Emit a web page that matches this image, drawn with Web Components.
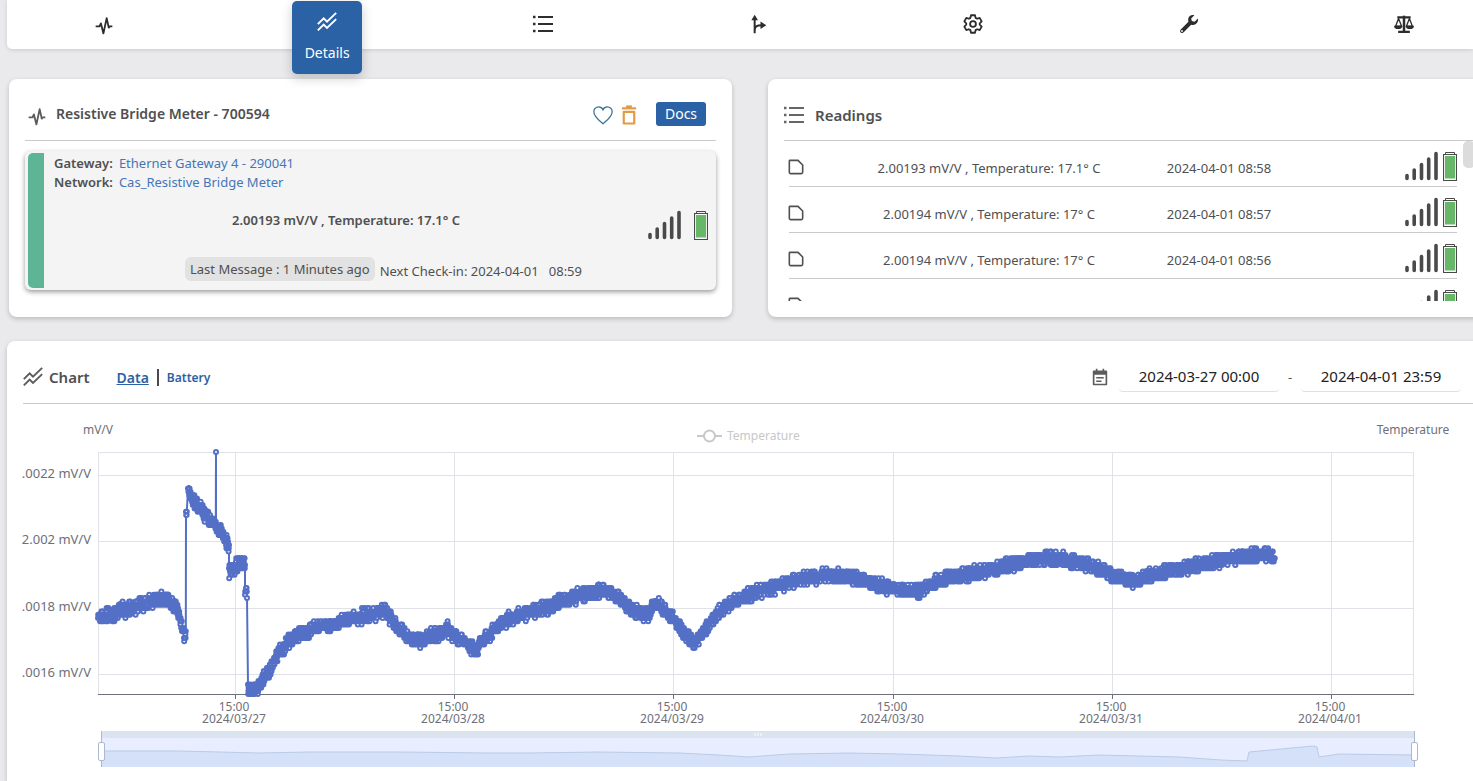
<!DOCTYPE html>
<html lang="en">
<head>
<meta charset="utf-8">
<title>Resistive Bridge Meter</title>
<style>
  html, body { margin: 0; height: 100%; }
  body {
    --ink: #4f5051; --blue: #2b62a5; --link: #4576b8; --line: #c9cacc;
    font: 13px/20px "Noto Sans", "Noto Sans CJK KR", sans-serif;
    color: var(--ink); background: #eaeaec;
  }
</style>
</head>
<body>
<meter-app></meter-app>

<script>
const define = (name, html, setup) => {
  const template = document.createElement('template');
  template.innerHTML = html;
  customElements.define(name, class extends HTMLElement {
    connectedCallback() {
      if (this.shadowRoot) return;
      const root = this.attachShadow({ mode: 'open' });
      root.append(template.content.cloneNode(true));
      if (setup) setup(this, root);
    }
  });
};

/* ---------- icons ---------- */
const ICONS = {
  pulse: '<path d="M2 12.5h4.6l1.7-3.6 3 12L15.2 2.5l2.5 11.5 1-1.500H22" fill="none" stroke="currentColor" stroke-width="2.2" stroke-linejoin="round"/>',
  trend: '<path d="M1 14.5l7-7 4 4L23 1M1 22l7-7 4 4L23 8.500" fill="none" stroke="currentColor" stroke-width="2.3"/>',
  list: '<path d="M0 3.500h3M0 12h3M0 20.500h3" stroke="currentColor" stroke-width="3"/><path d="M6 3.500h18M6 12h18M6 20.500h18" stroke="currentColor" stroke-width="2.400"/>',
  route: '<path d="M8 23V5M8 20c0-5 2-6.500 9-6.500" fill="none" stroke="currentColor" stroke-width="2.400"/><path d="M8 1l4 6.500H4zM22 13.500l-7 4.500V9z" fill="currentColor"/>',
  gear: '<path d="M9.600 1.500h4.800l.7 3.100 1.900 1.100 3-1 2.400 4.200-2.300 2.300v1.600l2.300 2.300-2.400 4.200-3-1-1.900 1.100-.7 3.100H9.600l-.7-3.100L7 18.300l-3 1-2.400-4.200 2.300-2.300v-1.600L1.600 8.900 4 4.700l3 1 1.900-1.100z" fill="none" stroke="currentColor" stroke-width="2.200" stroke-linejoin="round"/><circle cx="12" cy="12" r="3.500" fill="none" stroke="currentColor" stroke-width="2.200"/>',
  wrench: '<path d="M22.700 5.500l-4 3.800-3.300-.8-.8-3.200L18.400 1.400C14.500.2 10.600 3 11 7.500c.1.700.1 1.300.3 1.800L1.800 18.800a2.500 2.500 0 0 0 3.500 3.500l9.300-9.400c4.600 1.600 9.200-2.300 8.100-7.400zM3.600 21.500a1.100 1.100 0 1 1 0-2.200 1.100 1.100 0 0 1 0 2.200z" fill="currentColor"/>',
  scale: '<path d="M4 4h16M5 21.500h14" stroke="currentColor" stroke-width="2.600"/><path d="M12 2v19" stroke="currentColor" stroke-width="3"/><path d="M5.500 5.500L2 14.500h7zM18.500 5.500L15 14.500h7z" fill="none" stroke="currentColor" stroke-width="1.600"/><path d="M0 14h10a5 4 0 0 1-10 0zM14 14h10a5 4 0 0 1-10 0z" fill="currentColor"/>',
  heart: '<path d="M12 22.500C8 19 1 14 1 8 1 4.700 3.600 2.300 6.700 2.300c2.400 0 4.400 1.300 5.300 3.500.9-2.200 2.900-3.500 5.300-3.500C20.400 2.300 23 4.700 23 8c0 6-7 11-11 14.500z" fill="none" stroke="currentColor" stroke-width="1.500"/>',
  trash: '<path d="M3.500 4h17" stroke="currentColor" stroke-width="2.600"/><path d="M8.500 2h7" stroke="currentColor" stroke-width="3"/><path d="M5.700 8.200h12.600v14H5.700z" fill="none" stroke="currentColor" stroke-width="2.600" stroke-linejoin="round"/>',
  note: '<path d="M3 2h12l7 7v11a2 2 0 0 1-2 2H4a2 2 0 0 1-2-2V3a1 1 0 0 1 1-1z" fill="none" stroke="currentColor" stroke-width="2.400"/>',
  calendar: '<path d="M3.500 4.500h17v17.500h-17z" fill="none" stroke="currentColor" stroke-width="2.200" stroke-linejoin="round"/><path d="M3.500 7h17" stroke="currentColor" stroke-width="4"/><path d="M7.500 1v4M16.500 1v4" stroke="currentColor" stroke-width="2.200"/><path d="M7 13h10M7 17.500h7" stroke="currentColor" stroke-width="2"/>'
};
define('ui-icon', `
<style>
  :host { display: inline-block; width: 20px; height: 20px; flex: none; }
  svg { display: block; width: 100%; height: 100%; }
</style>
<svg viewBox="0 0 24 24" aria-hidden="true"></svg>`, (host, root) => {
  root.querySelector('svg').innerHTML = ICONS[host.getAttribute('name')];
});

/* signal strength beside the battery level */
define('device-status', `
<style>
  :host { display: inline-flex; align-items: flex-end; gap: var(--status-gap, 5px); }
  svg { display: block; }
</style>
<svg width="33" height="30" viewBox="0 0 33 30" role="img" aria-label="Signal">
  <path d="M2 24.500v3M9.200 19v8.500M16.500 13.500v14M23.700 8v19.500M31 2.500v25" stroke="#4a4a4a" stroke-width="3.600" stroke-linecap="round"/>
</svg>
<svg width="14" height="30" viewBox="0 0 14 30" role="img" aria-label="Battery">
  <path d="M2.500 3.500v-2h9v2" fill="none" stroke="#4a4a4a"/>
  <path d="M.5 3.500h13v26H.5z" fill="#fff" stroke="#4a4a4a" stroke-width="1.200"/>
  <path d="M2 5h10v22.500H2z" fill="#66b868"/>
</svg>`);

/* ---------- top navigation ---------- */
define('nav-item', `
<style>
  :host { display: flex; justify-content: center; }
  :host([first]) { padding: 2px 16px 0 0; }
  a { display: flex; flex-direction: column; align-items: center; color: #2d2d2d; text-decoration: none; padding-top: 14px; }
  slot { display: none; }
  :host([active]) a {
    box-sizing: border-box; width: 70px; height: 73px; margin-top: 1px; padding-top: 11px; gap: 11px;
    color: #fff; background: var(--blue); border-radius: 5px; box-shadow: 0 4px 12px #0003;
    font-size: 14px;
  }
  :host([active]) slot { display: block; }
</style>
<a href="#"><ui-icon></ui-icon><slot></slot></a>`, (host, root) => {
  root.querySelector('ui-icon').replaceWith(Object.assign(document.createElement('template'), {
    innerHTML: `<ui-icon name="${host.getAttribute('icon')}"></ui-icon>`
  }).content);
  root.querySelector('a').setAttribute('aria-label', host.textContent || host.getAttribute('icon'));
});
define('top-nav', `
<style>
  :host { display: block; height: 49px; margin-left: 7px; background: #fff; border-radius: 0 0 0 5px; box-shadow: 0 1px 4px #0002; position: relative; z-index: 1; }
  nav { display: grid; grid-template-columns: repeat(7, minmax(0, 1fr)); margin: 0 -39px 0 -3px; }
</style>
<nav>
  <nav-item first icon="pulse"></nav-item>
  <nav-item active icon="trend">Details</nav-item>
  <nav-item icon="list"></nav-item>
  <nav-item icon="route"></nav-item>
  <nav-item icon="gear"></nav-item>
  <nav-item icon="wrench"></nav-item>
  <nav-item icon="scale"></nav-item>
</nav>`);

/* ---------- card shell ---------- */
define('panel-card', `
<style>
  :host { display: flex; flex-direction: column; background: #fff; border-radius: 8px; box-shadow: 0 2px 5px #0003; padding: 0 16px; min-width: 0; box-sizing: border-box; }
  header { display: flex; align-items: center; height: var(--head-height, 62px); padding-top: var(--head-top, 0px); box-sizing: border-box; border-bottom: 1px solid var(--line); flex: none; }
  header ::slotted(*) { flex: 1; }
</style>
<header><slot name="head"></slot></header>
<slot></slot>`);

/* ---------- sensor summary ---------- */
define('sensor-card', `
<style>
  :host { display: block; }
  panel-card { --head-top: 8px; padding-bottom: 27px; }
  .head { display: flex; align-items: center; }
  h2 { margin: 0; flex: 1; font-size: 14px; font-weight: 600; }
  .pulse { margin: 6px 9px 0 2px; color: #5c5c5c; }
  .heart { color: #37729a; }
  .trash { color: #e29a45; }
  .tool { border: 0; background: none; padding: 2px 0 0; margin-right: 6px; display: flex; }
  .docs { font: inherit; font-size: 14px; line-height: 20px; color: #fff; background: var(--blue); border: 0; border-radius: 3px; padding: 2px 0; width: 50px; margin: 0 10px 0 11px; }
  .box { display: flex; margin-top: 10px; height: 139px; background: #f4f4f4; border-radius: 6px; box-shadow: 0 2px 5px #0006; }
  .bar { width: 16px; margin: 2px 0 2px 3px; background: #5eb595; border-radius: 5px 0 0 5px; flex: none; }
  .body { flex: 1; display: flex; flex-direction: column; padding-top: 3px; min-width: 0; }
  dl { margin: 0 0 0 10px; display: grid; grid-template-columns: auto 1fr; column-gap: 6px; line-height: 19px; }
  dt { font-weight: 600; } dd { margin: 0; }
  a { color: var(--link); text-decoration: none; }
  .reading { display: flex; margin: 18px 8px 0 0; --status-gap: 13px; }
  .reading b { flex: 1; text-align: center; font-weight: 600; }
  .foot { display: flex; justify-content: center; align-items: flex-end; gap: 5px; margin-top: 17px; padding-left: 7px; white-space: pre; }
  .pill { background: #e2e2e2; border-radius: 6px; padding: 2px 5px; }
</style>
<panel-card>
  <div class="head" slot="head">
    <ui-icon class="pulse" name="pulse"></ui-icon>
    <h2>Resistive Bridge Meter - 700594</h2>
    <button class="tool heart" aria-label="Favourite"><ui-icon name="heart"></ui-icon></button>
    <button class="tool trash" aria-label="Delete"><ui-icon name="trash"></ui-icon></button>
    <button class="docs">Docs</button>
  </div>
  <div class="box">
    <div class="bar"></div>
    <div class="body">
      <dl>
        <dt>Gateway:</dt><dd><a href="#">Ethernet Gateway 4 - 290041</a></dd>
        <dt>Network:</dt><dd><a href="#">Cas_Resistive Bridge Meter</a></dd>
      </dl>
      <div class="reading"><b>2.00193 mV/V , Temperature: 17.1° C</b><device-status></device-status></div>
      <div class="foot"><span class="pill">Last Message : 1 Minutes ago</span><span>Next Check-in: 2024-04-01&nbsp;&nbsp; 08:59</span></div>
    </div>
  </div>
</panel-card>`);

/* ---------- readings list ---------- */
define('readings-card', `
<style>
  :host { display: block; }
  panel-card { --head-top: 10px; padding-bottom: 16px; }
  .head { display: flex; align-items: center; gap: 11px; }
  .head ui-icon { color: #666; }
  h2 { margin: 0; font-size: 15px; font-weight: 600; }
  .list { height: 160px; overflow: hidden; display: flex; gap: 6px; padding-left: 5px; }
  .wide { flex: 1; }
  table { border-collapse: separate; border-spacing: 0; table-layout: fixed; width: 100%; }
  td { height: 45px; padding: 0; border-bottom: 1px solid var(--line); vertical-align: top; text-align: center; }
  td span { display: block; padding-top: 17px; }
  td:first-child { width: 34px; text-align: left; }
  td:nth-child(3) { width: 128px; }
  td:last-child { width: 174px; text-align: right; }
  td ui-icon { width: 16px; height: 16px; margin: 18px 0 0 -1px; display: block; }
  device-status { margin-top: 10px; vertical-align: top; }
  .thumb { width: 12px; height: 27px; border-radius: 5px; background: #dcdcdc; flex: none; }
</style>
<panel-card>
  <div class="head" slot="head"><ui-icon name="list"></ui-icon><h2>Readings</h2></div>
  <div class="list"><div class="wide"><table><tbody></tbody></table></div><div class="thumb"></div></div>
</panel-card>`, (host, root) => {
  const rows = [
    ['2.00193 mV/V , Temperature: 17.1° C', '2024-04-01 08:58'],
    ['2.00194 mV/V , Temperature: 17° C', '2024-04-01 08:57'],
    ['2.00194 mV/V , Temperature: 17° C', '2024-04-01 08:56'],
    ['', '']
  ];
  root.querySelector('tbody').innerHTML = rows.map(([value, time]) =>
    `<tr><td><ui-icon name="note"></ui-icon></td><td><span>${value}</span></td><td><span>${time}</span></td><td><device-status></device-status></td></tr>`).join('');
});

/* ---------- line chart with zoom slider ---------- */
/* Trend of the series as [x, y] on a 1316 x 242 plot, one list per unbroken stretch */
const TREND = [
  [[0,165],[12,162],[24,158],[42,154],[52,150],[64,146],[72,149],[78,155],[82,167],[86,184],[88,186]],
  [[88,55],[89,66]],
  [[90,36],[92,43],[98,52],[106,61],[114,69],[124,80],[130,92],[131,96]],
  [[131,117],[135,118],[140,112],[147,112]],
  [[147,136],[149,142]],
  [[150,238],[154,239],[159,237],[165,226],[172,217],[182,198],[192,188],[202,182],[222,175],[242,170],[262,165],[282,160],[288,159],[294,168],[302,178],[314,188],[325,188],[334,183],[342,181],[349,177],[357,184],[367,190],[377,200],[387,186],[397,177],[410,167],[427,161],[447,156],[462,150],[477,145],[492,141],[504,138],[514,140],[524,148],[537,160],[550,164],[557,150],[564,156],[574,165],[584,178],[597,192],[607,178],[617,164],[632,152],[647,144],[667,138],[687,132],[707,126],[727,124],[747,124],[767,129],[787,135],[807,139],[820,140],[832,133],[847,127],[867,122],[887,119],[907,114],[927,109],[947,106],[962,106],[977,109],[992,114],[1012,122],[1027,127],[1037,130],[1052,123],[1067,120],[1087,116],[1107,112],[1127,107],[1147,104],[1162,103],[1172,102],[1177,108]]
];
const SPIKE = 118;
const RESOLUTION = 3.32;
const OVERVIEW = [[0,20],[78,20],[158,22],[208,21],[298,21],[388,22],[428,22],[498,21],[578,22],[618,24],[648,26],[688,23],[748,22],[798,23],[858,25],[895,27],[928,25],[958,26],[998,24],[1078,26],[1120,29],[1146,30],[1148,21],[1170,19],[1190,17],[1213,15],[1216,16],[1218,26],[1238,23],[1314,24]];
const GRID = [[23, '.0022 mV/V'], [89, '2.002 mV/V'], [156, '.0018 mV/V'], [222, '.0016 mV/V']];
const DAYS = ['2024/03/27', '2024/03/28', '2024/03/29', '2024/03/30', '2024/03/31', '2024/04/01'];

function buildSeries(scale) {
  let seed = 7, line = '', dots = '', spiked = false;
  const random = () => (seed = (seed * 16807) % 2147483647) / 2147483647;
  const add = (x, y) => {
    const px = x * scale;
    line += (line ? 'L' : 'M') + px.toFixed(1) + ' ' + y.toFixed(1);
    dots += `M${(px - 2).toFixed(1)} ${y.toFixed(1)}a2 2 0 1 0 4 0a2 2 0 1 0 -4 0`;
  };
  for (const part of TREND) {
    for (let i = 1; i < part.length; i++) {
      const [x0, y0] = part[i - 1], [x1, y1] = part[i];
      for (let x = x0; x < x1; x += 0.2) {
        if (x >= SPIKE && !spiked) { spiked = true; add(SPIKE, 0); }
        const mid = y0 + (y1 - y0) * (x - x0) / (x1 - x0);
        const noisy = mid + (random() + random() - 1) * RESOLUTION * 2.3;
        add(x, Math.min(242, Math.round(noisy / RESOLUTION) * RESOLUTION));
      }
    }
  }
  return { line, dots };
}

define('line-chart', `
<style>
  :host { display: block; }
  svg { display: block; width: 100%; height: 370px; overflow: visible; }
  text { fill: #6e7079; font-size: 12px; }
  .value { font-size: 13px; }
  .off { fill: #c8c8c8; }
  .grid { stroke: #e0e2e8; fill: none; }
</style>
<svg role="img" aria-label="mV/V over time"></svg>`, (host, root) => {
  const svg = root.querySelector('svg');
  let drawn = 0;
  const draw = () => {
    const width = host.clientWidth;
    if (!width || width === drawn) return;
    drawn = width;
    const plot = width - 136, scale = plot / 1316;
    const { line, dots } = buildSeries(scale);
    const rows = GRID.map(([y, label]) =>
      `<path class="grid" d="M0 ${y + 0.5}H${plot}"/><text class="value" x="-7" y="${y + 3}" text-anchor="end">${label}</text>`).join('');
    const columns = DAYS.map((day, i) => {
      const x = Math.round((137 + i * 219.2) * scale);
      return `<path class="grid" d="M${x + 0.5} 0V242"/><path d="M${x + 0.5} 242v5" stroke="#6e7079"/>
        <text text-anchor="middle"><tspan x="${x - 1}" y="259">15:00</tspan><tspan x="${x - 1}" y="271">${day}</tspan></text>`;
    }).join('');
    const track = plot - 2;
    const overview = OVERVIEW.map(([x, y]) => `${(x * scale).toFixed(1)} ${y}`).join('L');
    const handle = x => `<path d="M${x} 0v36" stroke="#acb8d1"/><rect x="${x - 3}" y="11.500" width="6" height="18" rx="1.500" fill="#fff" stroke="#acb8d1"/>`;
    svg.innerHTML = `
      <text x="75" y="30" text-anchor="middle">mV/V</text>
      <text x="${75 + plot - 1}" y="30" text-anchor="middle">Temperature</text>
      <g transform="translate(${75 + Math.round(plot / 2)} 32)">
        <path d="M-59 0h25" stroke="#c8c8c8" stroke-width="2"/><circle cx="-46.500" cy="0" r="5.500" fill="#fff" stroke="#c8c8c8" stroke-width="2"/>
        <text class="off" x="-29" y="4">Temperature</text>
      </g>
      <g transform="translate(75 48)">
        ${rows}${columns}
        <path class="grid" d="M.5 242V.5H${plot - 0.5}V242"/>
        <path d="M0 242.500H${plot}" stroke="#6e7079"/>
        <path d="${line}" fill="none" stroke="#5470c6" stroke-width="2" stroke-linejoin="bevel"/>
        <path d="${dots}" fill="#fff" stroke="#5470c6" stroke-width="2"/>
      </g>
      <g transform="translate(78 327)">
        <rect width="${track}" height="36" fill="#e8eeff"/>
        <rect width="${track}" height="7" fill="#dbe3ee"/>
        <path d="M0 36L${overview}V36z" fill="#d5e1f8"/>
        <path d="M${overview}" fill="none" stroke="#b9cbe8"/>
        <path d="M${track / 2 - 3} 2v3m3-3v3m3-3v3" stroke="#fff"/>
        ${handle(0.5)}${handle(track - 0.5)}
      </g>`;
  };
  draw();
  new ResizeObserver(draw).observe(host);
});

define('chart-card', `
<style>
  :host { display: flex; }
  panel-card { flex: 1; --head-top: 9px; --head-height: 63px; border-radius: 8px 8px 0 0; }
  .head { display: flex; align-items: center; padding-right: 14px; }
  h2 { margin: 0 27px 0 6px; font-size: 15px; font-weight: 600; }
  ui-icon { color: #5c5c5c; }
  nav { flex: 1; display: flex; align-items: center; gap: 8px; padding-top: 2px; }
  nav a { color: var(--blue); font-size: 12px; font-weight: 600; text-decoration: none; }
  nav a[aria-current] { font-size: 14px; text-decoration: underline; }
  nav i { width: 2px; height: 17px; background: #4a4a4a; }
  .dates { display: flex; align-items: center; }
  .dates ui-icon { width: 18px; height: 18px; margin-right: 10px; }
  input { width: 160px; height: 30px; box-sizing: border-box; border: 0; border-bottom: 1px solid #e0e0e0; border-radius: 4px; padding: 0; background: none; font: inherit; font-size: 15px; color: #222; text-align: center; outline: 0; }
  .dash { width: 22px; text-align: center; }
</style>
<panel-card>
  <div class="head" slot="head">
    <ui-icon name="trend"></ui-icon>
    <h2>Chart</h2>
    <nav><a href="#" aria-current="page">Data</a><i></i><a href="#">Battery</a></nav>
    <div class="dates">
      <ui-icon name="calendar"></ui-icon>
      <input aria-label="From" value="2024-03-27 00:00">
      <span class="dash">-</span>
      <input aria-label="To" value="2024-04-01 23:59">
    </div>
  </div>
  <line-chart></line-chart>
</panel-card>`);

/* ---------- page ---------- */
define('meter-app', `
<style>
  :host { display: flex; flex-direction: column; min-height: 100%; overflow-x: clip; }
  main { flex: 1; display: flex; flex-direction: column; gap: 24px; margin-right: -18px; padding: 30px 0 0 7px; }
  .top { display: grid; grid-template-columns: 1fr 1fr; gap: 36px; padding-left: 2px; }
  chart-card { flex: 1; }
</style>
<top-nav></top-nav>
<main>
  <div class="top"><sensor-card></sensor-card><readings-card></readings-card></div>
  <chart-card></chart-card>
</main>`);
</script>
</body>
</html>
